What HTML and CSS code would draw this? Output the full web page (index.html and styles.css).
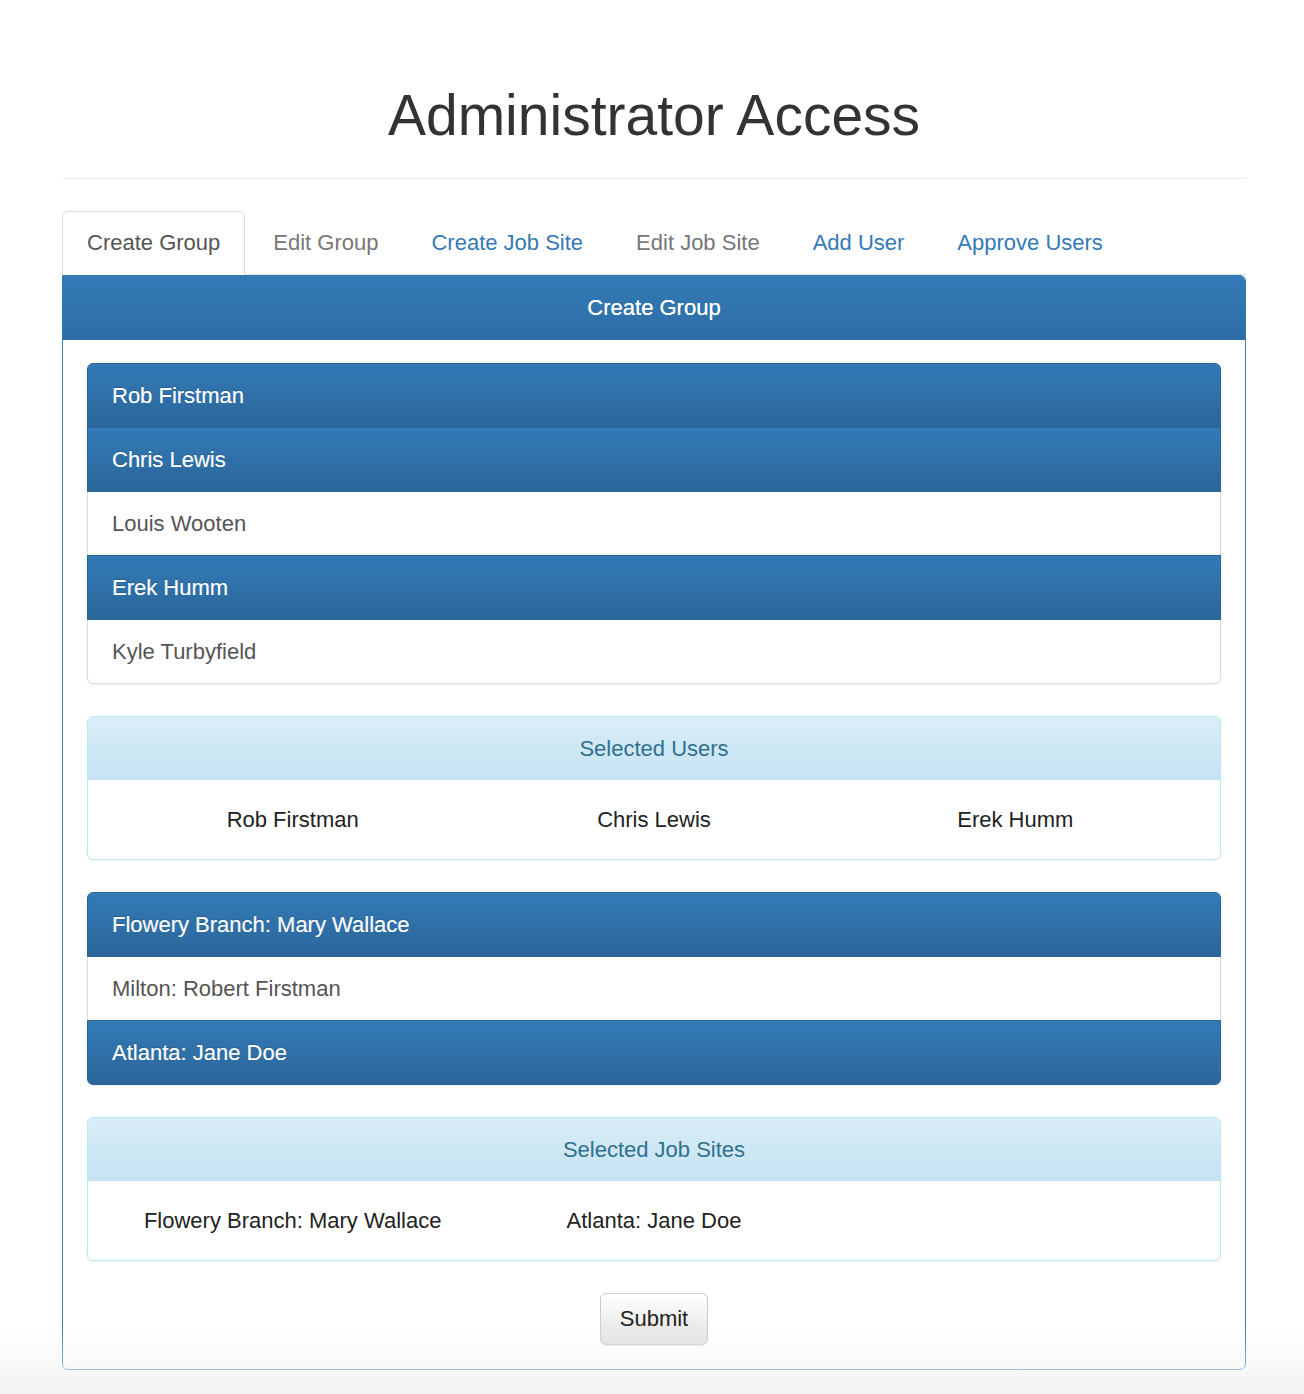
FILE: index.html
```html
<!DOCTYPE html>
<html lang="en">
<head>
<meta charset="utf-8">
<title>Administrator Access</title>
<link rel="stylesheet" href="styles.css">
</head>
<body>
<div class="container">
  <div class="page-header">
    <h1>Administrator Access</h1>
  </div>

  <ul class="nav-tabs">
    <li class="tab active"><a>Create Group</a></li>
    <li class="tab muted"><a>Edit Group</a></li>
    <li class="tab"><a>Create Job Site</a></li>
    <li class="tab muted"><a>Edit Job Site</a></li>
    <li class="tab"><a>Add User</a></li>
    <li class="tab"><a>Approve Users</a></li>
  </ul>

  <div class="panel panel-primary">
    <div class="panel-heading">Create Group</div>
    <div class="panel-body">
      <div class="list-group">
        <div class="list-item active">Rob Firstman</div>
        <div class="list-item active">Chris Lewis</div>
        <div class="list-item">Louis Wooten</div>
        <div class="list-item active">Erek Humm</div>
        <div class="list-item">Kyle Turbyfield</div>
      </div>

      <div class="panel panel-info">
        <div class="info-heading">Selected Users</div>
        <div class="info-body">
          <div class="col">Rob Firstman</div>
          <div class="col">Chris Lewis</div>
          <div class="col">Erek Humm</div>
        </div>
      </div>

      <div class="list-group">
        <div class="list-item active">Flowery Branch: Mary Wallace</div>
        <div class="list-item">Milton: Robert Firstman</div>
        <div class="list-item active">Atlanta: Jane Doe</div>
      </div>

      <div class="panel panel-info">
        <div class="info-heading">Selected Job Sites</div>
        <div class="info-body">
          <div class="col">Flowery Branch: Mary Wallace</div>
          <div class="col">Atlanta: Jane Doe</div>
          <div class="col"></div>
        </div>
      </div>

      <div class="actions">
        <button class="btn" type="button">Submit</button>
      </div>
    </div>
  </div>
</div>
<div class="bottom-fade"></div>
</body>
</html>
```

FILE: styles.css
```css
* { box-sizing: border-box; }

html, body {
  margin: 0;
  padding: 0;
  background: #fff;
}

body {
  font-family: "Liberation Sans", Arial, Helvetica, sans-serif;
  font-size: 22px;
  line-height: 31px;
  color: #333;
}

.container {
  width: 1184px;
  margin: 0 58px 0 62px;
}

.page-header {
  padding-top: 84px;
  padding-bottom: 32px;
  border-bottom: 1px solid #eee;
  text-align: center;
}

.page-header h1 {
  margin: 0;
  font-size: 57px;
  line-height: 62px;
  font-weight: 400;
  color: #333;
}

.nav-tabs {
  list-style: none;
  margin: 32px 0 0;
  padding: 0;
  display: flex;
  border-bottom: 1px solid #ddd;
}

.tab {
  margin-right: 3px;
  margin-bottom: -1px;
}

.tab a {
  display: block;
  padding: 15px 24px;
  line-height: 32px;
  border: 1px solid transparent;
  border-radius: 6px 6px 0 0;
  color: #337ab7;
}

.tab.muted a { color: #777; }

.tab.active a {
  color: #555;
  background: #fff;
  border-color: #ddd;
  border-bottom-color: transparent;
}

.panel {
  background: #fff;
  border: 1px solid #337ab7;
  border-radius: 0 6px 6px 6px;
}

.panel-heading {
  padding: 16px 24px;
  line-height: 32px;
  text-align: center;
  color: #fff;
  background: linear-gradient(to bottom, #337ab7 0%, #2e6da4 100%);
  border-radius: 0 5px 0 0;
  text-shadow: 0 0 0.4px #fff;
}

.panel-body {
  padding: 23px 24px 24px;
}

.list-group {
  margin-bottom: 32px;
  border-radius: 6px;
  box-shadow: 0 1px 2px rgba(0, 0, 0, 0.075);
}

.list-item {
  padding: 16px 24px;
  line-height: 31px;
  border: 1px solid #ddd;
  margin-bottom: -1px;
  background: #fff;
  color: #555;
}

.list-item:first-child { border-radius: 6px 6px 0 0; }
.list-item:last-child { border-radius: 0 0 6px 6px; margin-bottom: 0; }

.list-item.active {
  position: relative;
  z-index: 1;
  color: #fff;
  border-color: #2b669a;
  background: linear-gradient(to bottom, #337ab7 0%, #2b669a 100%);
  text-shadow: 0 -1px 0 #286090, 0 0 0.4px #fff;
}

.panel-info {
  border: 1px solid #bce8f1;
  border-radius: 6px;
  margin-bottom: 32px;
  box-shadow: 0 1px 2px rgba(0, 0, 0, 0.05);
}

.info-heading {
  padding: 16px 24px;
  line-height: 31px;
  text-align: center;
  color: #31708f;
  background: linear-gradient(to bottom, #d9edf7 0%, #c4e3f3 100%);
  border-radius: 5px 5px 0 0;
}

.info-body {
  padding: 24px;
  display: grid;
  grid-template-columns: repeat(3, 1fr);
  line-height: 31px;
  color: #222;
}

.col { text-align: center; }

.actions {
  display: flex;
  justify-content: center;
}

.btn {
  font-family: inherit;
  font-size: 22px;
  line-height: 32px;
  color: #222;
  padding: 9px 19px;
  border: 1px solid #ccc;
  border-radius: 6px;
  background: linear-gradient(to bottom, #fff 0%, #e0e0e0 100%);
  box-shadow: inset 0 1px 0 rgba(255, 255, 255, 0.15), 0 1px 1px rgba(0, 0, 0, 0.075);
}

.bottom-fade {
  position: fixed;
  left: 0;
  right: 0;
  bottom: 0;
  height: 70px;
  pointer-events: none;
  background: linear-gradient(to bottom, rgba(242, 242, 242, 0) 0%, rgba(242, 242, 242, 0.45) 55%, rgba(242, 242, 242, 1) 100%);
}
```
